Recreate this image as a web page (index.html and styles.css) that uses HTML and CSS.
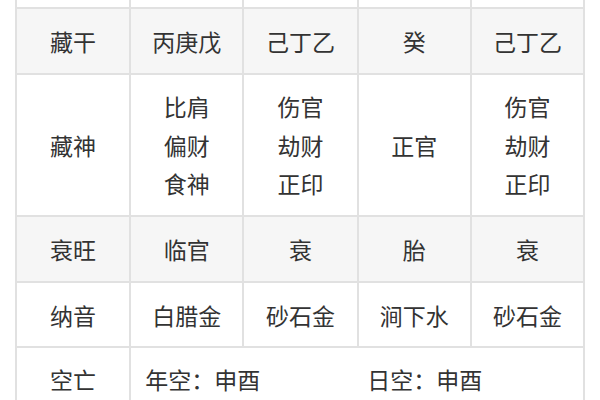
FILE: index.html
```html
<!DOCTYPE html>
<html lang="zh-CN">
<head>
<meta charset="utf-8">
<title>藏干藏神</title>
<link rel="stylesheet" href="styles.css">
</head>
<body>
<table class="bazi">
  <colgroup>
    <col class="c1"><col class="c2"><col class="c3"><col class="c4"><col class="c5">
  </colgroup>
  <tbody>
    <tr class="row-cut"><td></td><td></td><td></td><td></td><td></td></tr>
    <tr class="row-gray row-std"><td>藏干</td><td>丙庚戊</td><td>己丁乙</td><td>癸</td><td>己丁乙</td></tr>
    <tr class="row-tall">
      <td>藏神</td>
      <td><div class="stack"><span>比肩</span><span>偏财</span><span>食神</span></div></td>
      <td><div class="stack"><span>伤官</span><span>劫财</span><span>正印</span></div></td>
      <td>正官</td>
      <td><div class="stack"><span>伤官</span><span>劫财</span><span>正印</span></div></td>
    </tr>
    <tr class="row-gray row-std"><td>衰旺</td><td>临官</td><td>衰</td><td>胎</td><td>衰</td></tr>
    <tr class="row-std2"><td>纳音</td><td>白腊金</td><td>砂石金</td><td>涧下水</td><td>砂石金</td></tr>
    <tr class="row-last">
      <td>空亡</td>
      <td colspan="4" class="span-cell"><div class="kong"><span>年空：申酉</span><span>日空：申酉</span></div></td>
    </tr>
  </tbody>
</table>
</body>
</html>
```

FILE: styles.css
```css
html, body {
  margin: 0;
  padding: 0;
  background: #ffffff;
}

body {
  font-family: "Noto Sans CJK SC", "Noto Sans", sans-serif;
  color: #333333;
  overflow: hidden;
}

.bazi {
  margin-left: 15px;
  border-collapse: collapse;
  table-layout: fixed;
  width: 570px;
  font-size: 23px;
}

.bazi td {
  border: 2px solid #e1e1e1;
  text-align: center;
  vertical-align: middle;
  padding: 0;
  line-height: 38px;
}

.c1 { width: 114px; }
.c2 { width: 113px; }
.c3 { width: 114px; }
.c4 { width: 113px; }
.c5 { width: 113px; }

.row-cut td { height: 7px; border-top: none; }

.row-gray td { background: #f6f6f6; }

.row-std td { height: 64px; }
.row-std2 td { height: 63px; }
.row-tall td { height: 140px; }
.row-last td { height: 62px; }

.stack {
  display: flex;
  flex-direction: column;
  align-items: center;
  line-height: 38.5px;
}

.span-cell { text-align: left; }

.kong {
  display: flex;
  gap: 107px;
  padding-left: 14px;
}
```
